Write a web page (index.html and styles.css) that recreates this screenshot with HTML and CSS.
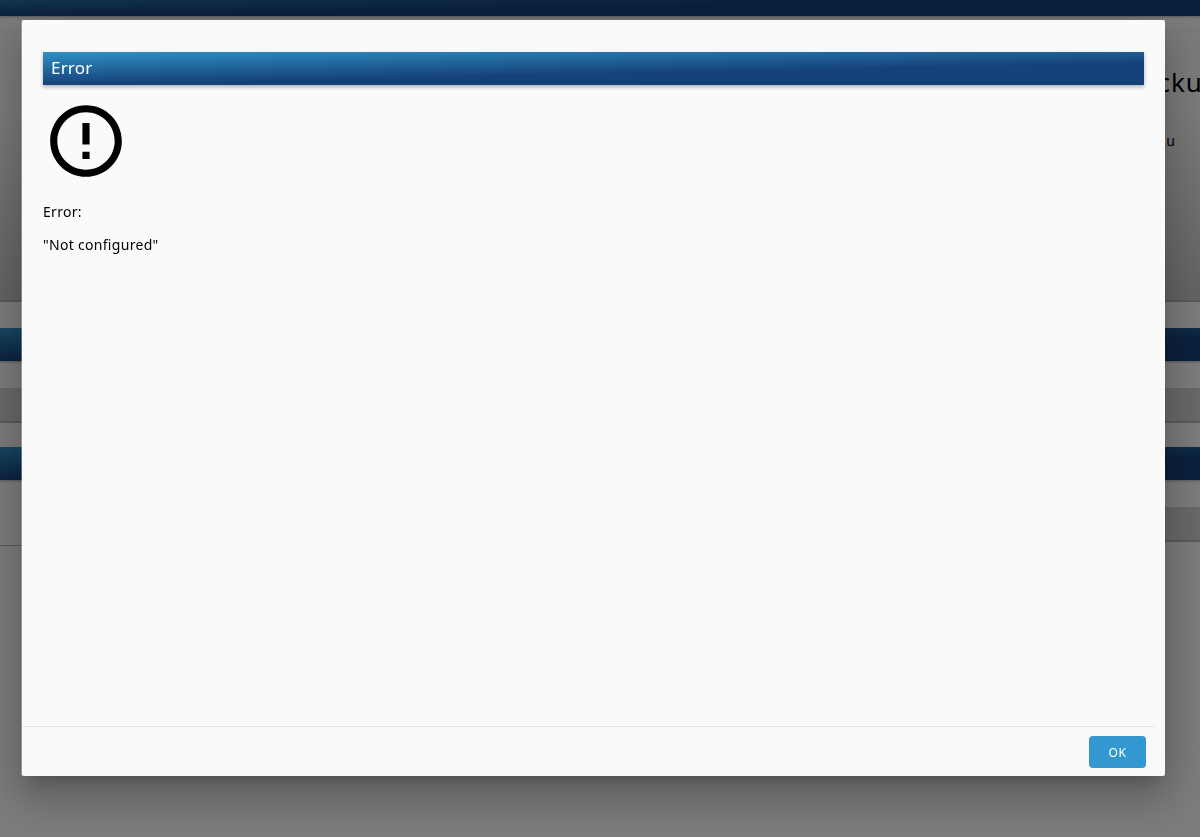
FILE: index.html
```html
<!DOCTYPE html>
<html lang="en">
<head>
<meta charset="utf-8">
<title>Error</title>
<link rel="stylesheet" href="styles.css">
</head>
<body>
<div class="page">
  <div class="bar top-bar"></div>
  <section class="hero">
    <h1 class="hero-title">Backu</h1>
    <p class="hero-text">Menu</p>
  </section>
  <div class="bar first-bar"></div>
  <div class="row"></div>
  <div class="bar second-bar"></div>
  <div class="split">
    <div class="split-left"></div>
    <div class="split-right"></div>
  </div>
</div>
<div class="backdrop"></div>
<div class="dialog" role="dialog">
  <div class="dialog-body">
    <h2 class="dialog-title">Error</h2>
    <svg class="error-icon" viewBox="0 0 24 24" aria-hidden="true">
      <path d="M11 15h2v2h-2zm0-8h2v6h-2zm.99-5C6.47 2 2 6.48 2 12s4.47 10 9.99 10C17.52 22 22 17.52 22 12S17.52 2 11.99 2zM12 20c-4.42 0-8-3.58-8-8s3.58-8 8-8 8 3.58 8 8-3.58 8-8 8z"/>
    </svg>
    <p class="message">Error:</p>
    <p class="message">"Not configured"</p>
  </div>
  <div class="dialog-actions">
    <button class="ok-button" type="button">OK</button>
  </div>
</div>
</body>
</html>
```
FILE: styles.css
```css
* { box-sizing: border-box; }
html, body { margin: 0; height: 100%; overflow: hidden; }
body {
  background: #f6f6f6;
  font-family: "Noto Sans", "Open Sans", sans-serif;
  color: #000;
}
.page { height: 837px; overflow: hidden; }
.bar {
  height: 33px;
  background: linear-gradient(178.85deg, #2e90c4 0, #16427a 60%, #14407a 100%);
  box-shadow: 0 1px 2px rgba(0, 0, 0, .3);
}
.top-bar { margin-top: -17px; }
.hero {
  height: 272px;
  margin-top: 14px;
  padding: 33px 0 0 1124px;
  border-top: 1px solid #e8e8e8;
  border-bottom: 2px solid #b0b0b0;
  white-space: nowrap;
  background: linear-gradient(#f4f4f4 30%, #c4c4c4 100%);
}
.hero-title { margin: 0; font-size: 26px; font-weight: 400; letter-spacing: 1px; line-height: 36px; }
.hero-text { margin: 31px 0 0 10px; font-size: 14px; letter-spacing: 1px; line-height: 20px; }
.first-bar { margin-top: 26px; }
.row {
  height: 35px;
  margin-top: 27px;
  background: #d0d0d0;
  border-bottom: 2px solid #b4b4b4;
}
.second-bar { margin-top: 24px; }
.split { display: flex; }
.split-left { flex: 1; height: 66px; border-bottom: 1px solid #b0b0b0; }
.split-right {
  flex: 1;
  height: 35px;
  margin-top: 27px;
  background: #d0d0d0;
  border-bottom: 2px solid #b4b4b4;
}
.backdrop { position: fixed; inset: 0; background: rgba(0, 0, 0, .5); }
.dialog {
  position: fixed;
  left: 22px;
  top: 20px;
  width: 1143px;
  height: 756px;
  display: flex;
  flex-direction: column;
  background: #fafafa;
  border-radius: 2px;
  box-shadow: -1px 0 0 rgba(255, 255, 255, .3), 0 11px 15px -7px rgba(0, 0, 0, .2), 0 24px 38px 3px rgba(0, 0, 0, .14), 0 9px 46px 8px rgba(0, 0, 0, .12);
}
.dialog-body { flex: 1; padding: 32px 21px 0; }
.dialog-title {
  margin: 0;
  height: 33px;
  padding-left: 8px;
  font-size: 17px;
  font-weight: 400;
  letter-spacing: .2px;
  line-height: 31px;
  color: #fff;
  background: linear-gradient(178.85deg, #2e90c4 0, #16427a 60%, #14407a 100%);
  box-shadow: 0 2px 4px rgba(0, 0, 0, .3);
}
.error-icon { display: block; width: 86px; height: 86px; margin-top: 13px; fill: #000; }
.message { margin: 0 0 13px; font-size: 14px; letter-spacing: .3px; line-height: 20px; }
.error-icon + .message { margin-top: 18px; }
.dialog-actions {
  height: 50px;
  margin-right: 10px;
  padding: 9px 9px 0 0;
  display: flex;
  justify-content: flex-end;
  align-items: flex-start;
  border-top: 1px solid #e6e6e6;
}
.ok-button {
  width: 57px;
  height: 32px;
  padding: 0;
  border: 0;
  border-radius: 4px;
  background: #3398d0;
  color: #fff;
  font: 400 12px "Noto Sans", sans-serif;
  letter-spacing: .5px;
}
```
